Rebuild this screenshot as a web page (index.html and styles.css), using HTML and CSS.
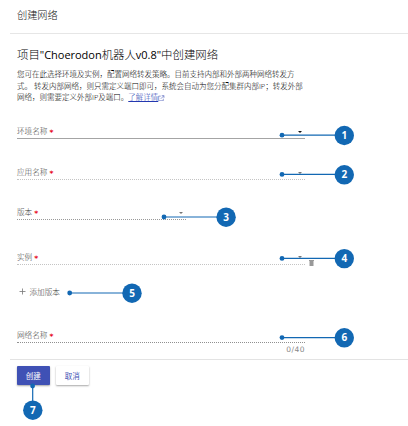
FILE: index.html
```html
<!DOCTYPE html>
<html lang="zh-CN">
<head>
<meta charset="utf-8">
<title>创建网络</title>
<link rel="stylesheet" href="styles.css">
</head>
<body>
<div class="page">
  <header class="header">创建网络</header>
  <main class="content">
    <h1 class="title">项目<span class="latin">"Choerodon</span>机器人<span class="latin">v0.8"</span>中创建网络</h1>
    <p class="intro">您可在此选择环境及实例，配置网络转发策略。目前支持内部和外部两种网络转发方<br>式。 转发内部网络，则只需定义端口即可，系统会自动为您分配集群内部IP；转发外部<br>网络，则需要定义外部IP及端口。<a class="link" href="#">了解详情</a><svg class="open" viewBox="0 0 7 7"><path d="M3 1.2H.7v5h5V4M4 .7h2.4v2.4M6.2.9 3 4.1"/></svg></p>
    <form class="form">
      <div class="field env"><label>环境名称</label><i class="star">*</i><b class="arrow dark"></b></div>
      <div class="field app"><label>应用名称</label><i class="star">*</i><b class="arrow"></b></div>
      <div class="field version"><label>版本</label><i class="star">*</i><b class="arrow"></b></div>
      <div class="field instance"><label>实例</label><i class="star">*</i><b class="arrow"></b><svg class="trash" viewBox="0 0 5 6"><path d="M0 0h5v1H0zM.5 1h4v5h-4z"/></svg></div>
      <div class="add"><svg class="plus" viewBox="0 0 7 7"><path d="M3.5.5v6M.5 3.5h6"/></svg><span>添加版本</span></div>
      <div class="field name"><label>网络名称</label><i class="star">*</i></div>
      <div class="count">0/40</div>
    </form>
  </main>
  <footer class="footer">
    <button class="btn primary">创建</button>
    <button class="btn">取消</button>
  </footer>
  <svg class="callouts" viewBox="0 0 408 426">
    <g class="lines"><path d="M282 135.2H340M282 174.4H340M164 217H220M282 258.4H340M70 293H126M282 337.6H340M32.7 386V406"/></g>
    <g class="dots"><circle cx="282" cy="135.2" r="2.4"/><circle cx="282" cy="174.4" r="2.4"/><circle cx="164" cy="217" r="2.4"/><circle cx="282" cy="258.4" r="2.4"/><circle cx="69.7" cy="293" r="2.4"/><circle cx="282" cy="337.6" r="2.4"/><circle cx="32.6" cy="386" r="2.4"/>
    <circle cx="344.3" cy="135.5" r="9.7"/><circle cx="344.3" cy="174.8" r="9.7"/><circle cx="226.1" cy="217.2" r="9.7"/><circle cx="344.3" cy="258.6" r="9.7"/><circle cx="132" cy="293.2" r="9.7"/><circle cx="344.3" cy="337.8" r="9.7"/><circle cx="32.8" cy="410.2" r="9.7"/></g>
    <g class="numbers"><text x="344.3" y="139">1</text><text x="344.3" y="178.3">2</text><text x="226.1" y="220.7">3</text><text x="344.3" y="262.1">4</text><text x="132.2" y="296.9">5</text><text x="344.3" y="341.3">6</text><text x="32.8" y="414.2">7</text></g>
  </svg>
</div>
</body>
</html>
```
FILE: styles.css
```css
* { box-sizing: border-box; }
body { margin: 0; background: #fff; font-family: "Noto Sans", "Noto Sans CJK SC", sans-serif; font-weight: 300; }
.page { position: relative; width: 408px; height: 426px; overflow: hidden; display: flex; flex-direction: column; }
.header { height: 34px; margin-left: 10px; padding-left: 7px; border-bottom: 1px solid #e6e6e6; font-size: 10.2px; line-height: 30px; color: #111; flex: none; }
.content { height: 325px; padding-left: 17px; flex: none; }
.title { margin: 12px 0 0; height: 18px; font-size: 11.4px; line-height: 18px; font-weight: 300; color: #000; white-space: nowrap; }
.latin { font-family: "Open Sans", sans-serif; font-size: 11px; font-weight: 500; letter-spacing: -.02px; }
.intro { margin: 5px 0 0; height: 35px; font-family: "Open Sans", "Noto Sans CJK SC", sans-serif; font-size: 7.5px; line-height: 11.5px; color: #000; white-space: nowrap; }
.link { color: #2438b0; text-decoration: underline; }
.open { width: 6.5px; height: 6.5px; vertical-align: -1px; margin-left: 0; fill: none; stroke: #3f51b5; stroke-width: .6; }
.form { width: 288px; display: flex; flex-direction: column; }
.field { display: flex; align-items: center; height: 16px; flex: none; border-bottom: 1px dotted #c4c4c4; font-size: 7.6px; line-height: 15px; color: #444; }
.field label { padding-top: 2px; }
.env { margin-top: 19px; border-bottom: 1px solid #a4a4a4; }
.app { margin-top: 25px; }
.version { margin-top: 24px; width: 169px; border-color: #999; }
.instance { margin-top: 29px; }
.name { margin-top: 25px; border-color: #909090; }
.star { margin: 4px 0 0 2px; font: bold 7.5px "DejaVu Sans", sans-serif; color: #e60012; }
.arrow { flex: none; margin: 2px 3px 0 auto; border: 2px solid transparent; border-top-color: #777; border-bottom: 0; }
.dark { border-top-color: #111; }
.trash { width: 5px; height: 6px; margin: 13px -9px 0 0; fill: #999; flex: none; }
.instance .arrow { margin-right: 7px; margin-top: 0; }
.add { display: flex; align-items: center; gap: 3.5px; height: 18px; margin: 18px 0 1px 2px; font-size: 7.6px; color: #444; }
.add span { margin-top: -1px; }
.plus { width: 7px; height: 7px; margin-top: -2px; fill: none; stroke: #777; stroke-width: .8; }
.count { height: 13px; font: 7.5px/13px "DejaVu Sans", sans-serif; letter-spacing: .5px; text-align: right; color: #888; }
.footer { display: flex; gap: 6.5px; margin-left: 10px; padding: 6px 0 0 7px; border-top: 1px solid #e3e3e3; height: 67px; }
.btn { width: 32.5px; height: 18.5px; border: 0; padding: 1px 0 0; border-radius: 1px; background: #fff; color: #3f51b5; font: 400 7.5px/18px "Noto Sans CJK SC", sans-serif; box-shadow: 0 1px 2px rgba(0,0,0,.35); }
.primary { background: #3f51b5; color: #fff; }
.callouts { position: absolute; left: 0; top: 0; width: 408px; height: 426px; pointer-events: none; }
.lines { stroke: #1268b3; stroke-width: 1.2; fill: none; }
.dots { fill: #1268b3; }
.numbers { fill: #fff; font: bold 10px "Open Sans", sans-serif; text-anchor: middle; }
```
